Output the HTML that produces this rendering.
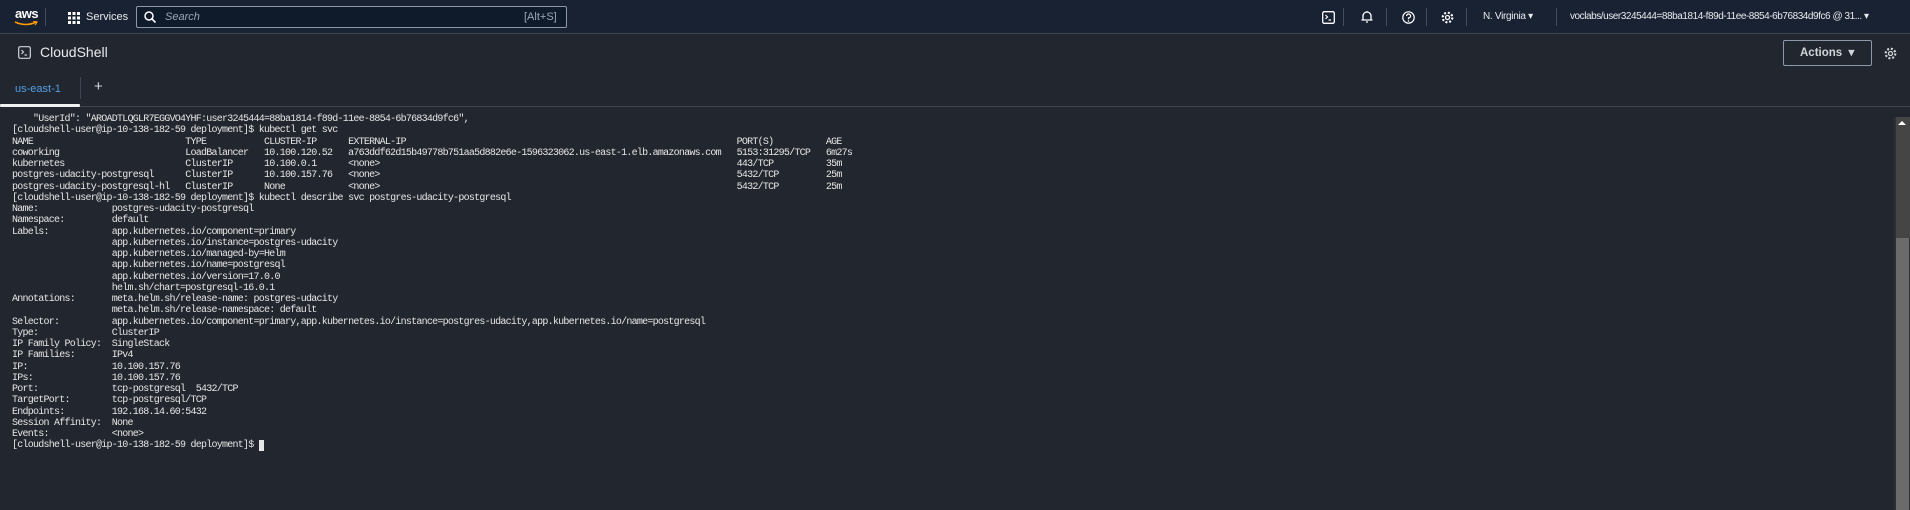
<!DOCTYPE html>
<html><head><meta charset="utf-8"><style>
*{margin:0;padding:0;box-sizing:border-box}
body{width:1910px;height:510px;overflow:hidden;background:#22262e;font-family:"Liberation Sans",sans-serif;position:relative}
.nav{position:absolute;left:0;top:0;width:1910px;height:34px;background:#192232;border-bottom:1px solid #3b4452}
.abs{position:absolute}
.nt{color:#e8eaed;font-size:11px;position:absolute;top:11px}
.sep{position:absolute;top:8px;width:1px;height:18px;background:#414d5c}
.hdr{position:absolute;left:0;top:35px;width:1910px;height:72px;background:#22262e;border-bottom:1px solid #414750}
pre{position:absolute;left:12px;top:114px;font-family:"Liberation Mono",monospace;font-size:10px;letter-spacing:-0.75px;line-height:11.25px;color:#e6e6e6}
</style></head><body>
<div class="nav">
  <div class="abs" style="left:15px;top:6px;color:#fff;font-size:13px;font-weight:bold;letter-spacing:-0.5px">aws</div>
  <svg class="abs" style="left:14px;top:21px" width="24" height="6"><path d="M1 1 Q12 6 22 1" stroke="#f90" stroke-width="1.6" fill="none"/><path d="M19 0 L23 1 L21 4" stroke="#f90" stroke-width="1.2" fill="none"/></svg>
  <div class="sep" style="left:45px"></div>
  <svg class="abs" style="left:68px;top:12px" width="12" height="12"><g fill="#fff"><rect x="0" y="0" width="3" height="3"/><rect x="4.5" y="0" width="3" height="3"/><rect x="9" y="0" width="3" height="3"/><rect x="0" y="4.5" width="3" height="3"/><rect x="4.5" y="4.5" width="3" height="3"/><rect x="9" y="4.5" width="3" height="3"/><rect x="0" y="9" width="3" height="3"/><rect x="4.5" y="9" width="3" height="3"/><rect x="9" y="9" width="3" height="3"/></g></svg>
  <div class="nt" style="left:86px;top:11px;font-size:11px">Services</div>
  <div class="abs" style="left:136px;top:6px;width:431px;height:22px;border:1px solid #8d99a8;border-radius:2px;background:#0f1b2a"></div>
  <svg class="abs" style="left:144px;top:11px" width="12" height="12"><circle cx="5" cy="5" r="4" stroke="#fff" stroke-width="1.5" fill="none"/><path d="M8 8 L11.5 11.5" stroke="#fff" stroke-width="1.6"/></svg>
  <div class="nt" style="left:165px;color:#9ba7b6;font-style:italic">Search</div>
  <div class="nt" style="left:524px;color:#9ba7b6">[Alt+S]</div>
  <svg class="abs" style="left:1322px;top:11px" width="13" height="13"><rect x="0.7" y="0.7" width="11.6" height="11.6" rx="1.5" stroke="#fff" stroke-width="1.3" fill="none"/><path d="M3.5 4 L5.5 6 L3.5 8 M6.5 9 H9" stroke="#fff" stroke-width="1.2" fill="none"/></svg>
  <div class="sep" style="left:1343px"></div>
  <svg class="abs" style="left:1361px;top:10px" width="12" height="14"><path d="M2 10 V6 A4 4 0 0 1 10 6 V10 Z M0.5 10 H11.5 M6 1 V2 M5 12 H7" stroke="#fff" stroke-width="1.3" fill="none"/></svg>
  <div class="sep" style="left:1386px"></div>
  <svg class="abs" style="left:1402px;top:11px" width="13" height="13"><circle cx="6.5" cy="6.5" r="5.7" stroke="#fff" stroke-width="1.2" fill="none"/><path d="M4.6 5 A2 2 0 1 1 6.5 7 V8.3" stroke="#fff" stroke-width="1.2" fill="none"/><circle cx="6.5" cy="10" r="0.8" fill="#fff"/></svg>
  <div class="sep" style="left:1426px"></div>
  <svg class="abs" style="left:1441px;top:11px" width="13" height="13"><circle cx="6.5" cy="6.5" r="2" stroke="#fff" stroke-width="1.3" fill="none"/><circle cx="6.5" cy="6.5" r="4.8" stroke="#fff" stroke-width="2.2" stroke-dasharray="2 1.8" fill="none"/></svg>
  <div class="sep" style="left:1466px"></div>
  <div class="nt" style="left:1483px;font-size:10px;letter-spacing:-0.3px">N. Virginia ▾</div>
  <div class="sep" style="left:1556px"></div>
  <div class="nt" style="left:1570px;font-size:10px;letter-spacing:-0.45px;white-space:nowrap">voclabs/user3245444=88ba1814-f89d-11ee-8854-6b76834d9fc6 @ 31... ▾</div>
</div>
<div class="hdr">
  <svg class="abs" style="left:18px;top:11px" width="13" height="13"><rect x="0.7" y="0.7" width="11.6" height="11.6" rx="1.5" stroke="#d1d5db" stroke-width="1.2" fill="none"/><path d="M3.5 4 L5.5 6 L3.5 8 M6.5 9 H9" stroke="#d1d5db" stroke-width="1.2" fill="none"/></svg>
  <div class="abs" style="left:40px;top:9px;color:#e8eaed;font-size:14px">CloudShell</div>
  <div class="abs" style="left:1783px;top:5px;width:89px;height:26px;border:1px solid #8d99a8;border-radius:2px;color:#d1d5db;font-size:11.5px;font-weight:bold;line-height:24px;padding-left:16px">Actions &nbsp;▾</div>
  <svg class="abs" style="left:1884px;top:12px" width="13" height="13"><circle cx="6.5" cy="6.5" r="2" stroke="#d1d5db" stroke-width="1.3" fill="none"/><circle cx="6.5" cy="6.5" r="4.8" stroke="#d1d5db" stroke-width="2.2" stroke-dasharray="2 1.8" fill="none"/></svg>
  <div class="abs" style="left:15px;top:48px;color:#539fe5;font-size:11px">us-east-1</div>
  <div class="abs" style="left:80px;top:42px;width:1px;height:22px;background:#3b4452"></div>
  <div class="abs" style="left:94px;top:43px;color:#d1d5db;font-size:15px">+</div>
  <div class="abs" style="left:0;top:69px;width:80px;height:3px;background:#f0f0f0;border-radius:1px"></div>
</div>
<div class="abs" style="left:1894px;top:117px;width:16px;height:393px;background:#2e2f33"></div>
<div class="abs" style="left:1896px;top:117px;width:14px;height:121px;background:#454545"></div>
<div class="abs" style="left:1898px;top:121px;width:0;height:0;border-left:4px solid transparent;border-right:4px solid transparent;border-bottom:4px solid #fff"></div>
<div class="abs" style="left:1896px;top:238px;width:13px;height:272px;background:#6b6b6b"></div>
<pre>    "UserId": "AROADTLQGLR7EGGVO4YHF:user3245444=88ba1814-f89d-11ee-8854-6b76834d9fc6",
[cloudshell-user@ip-10-138-182-59 deployment]$ kubectl get svc
NAME                             TYPE           CLUSTER-IP      EXTERNAL-IP                                                               PORT(S)          AGE
coworking                        LoadBalancer   10.100.120.52   a763ddf62d15b49778b751aa5d882e6e-1596323062.us-east-1.elb.amazonaws.com   5153:31295/TCP   6m27s
kubernetes                       ClusterIP      10.100.0.1      &lt;none&gt;                                                                    443/TCP          35m
postgres-udacity-postgresql      ClusterIP      10.100.157.76   &lt;none&gt;                                                                    5432/TCP         25m
postgres-udacity-postgresql-hl   ClusterIP      None            &lt;none&gt;                                                                    5432/TCP         25m
[cloudshell-user@ip-10-138-182-59 deployment]$ kubectl describe svc postgres-udacity-postgresql
Name:              postgres-udacity-postgresql
Namespace:         default
Labels:            app.kubernetes.io/component=primary
                   app.kubernetes.io/instance=postgres-udacity
                   app.kubernetes.io/managed-by=Helm
                   app.kubernetes.io/name=postgresql
                   app.kubernetes.io/version=17.0.0
                   helm.sh/chart=postgresql-16.0.1
Annotations:       meta.helm.sh/release-name: postgres-udacity
                   meta.helm.sh/release-namespace: default
Selector:          app.kubernetes.io/component=primary,app.kubernetes.io/instance=postgres-udacity,app.kubernetes.io/name=postgresql
Type:              ClusterIP
IP Family Policy:  SingleStack
IP Families:       IPv4
IP:                10.100.157.76
IPs:               10.100.157.76
Port:              tcp-postgresql  5432/TCP
TargetPort:        tcp-postgresql/TCP
Endpoints:         192.168.14.60:5432
Session Affinity:  None
Events:            &lt;none&gt;
[cloudshell-user@ip-10-138-182-59 deployment]$ <span style="background:#e6e6e6">&nbsp;</span></pre>
</body></html>
